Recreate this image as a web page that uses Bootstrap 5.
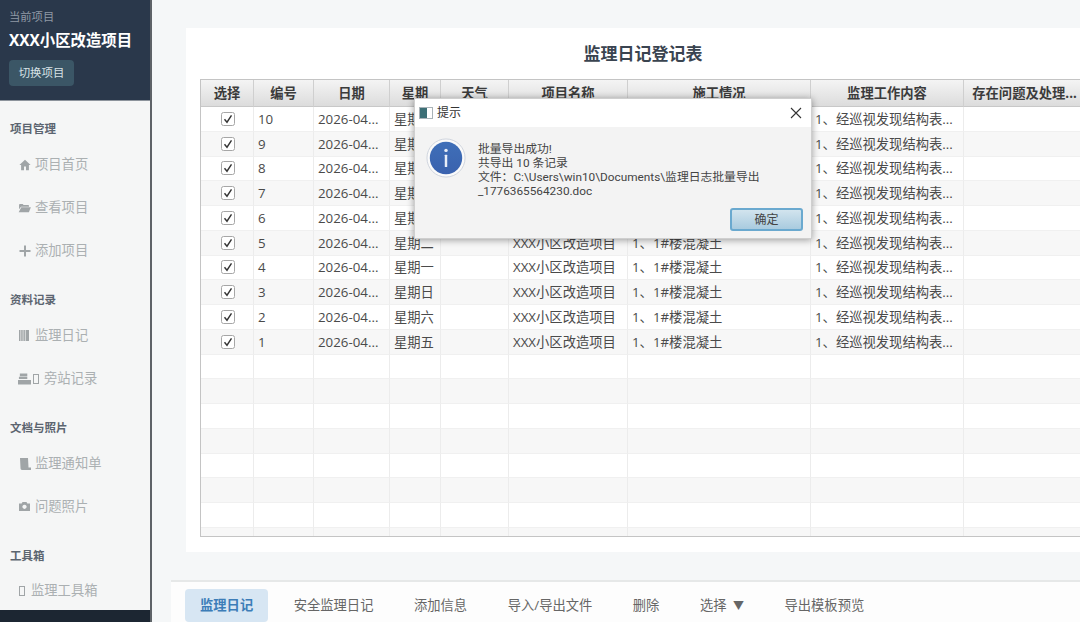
<!DOCTYPE html>
<html lang="zh">
<head>
<meta charset="utf-8">
<title>监理日记登记表</title>
<link href="https://cdn.jsdelivr.net/npm/bootstrap@5.3.0/dist/css/bootstrap.min.css" rel="stylesheet">
<style>
html,body{height:622px;overflow:hidden;}
body{font-family:"Open Sans","Noto Sans CJK SC",sans-serif;background:#f5f7f8;color:#444;width:1080px;}
.app-shell{height:622px;width:1080px;overflow:hidden;position:relative;}
.side-col{width:152px;flex:none;background:#f5f6f6;border-right:2px solid #5e6368;height:622px;}
.side-head{height:102px;background:#2a384b;border-bottom:1px solid #8d949c;padding:9px 9px 0;}
.side-kicker{font-size:11.3px;line-height:16px;color:#8f99a5;}
.side-project{font-size:15.4px;line-height:22px;font-weight:700;color:#fff;margin-top:5px;white-space:nowrap;}
.side-switch{display:block;width:65px;height:26px;margin-top:8px;padding:0;font-size:11.4px;line-height:26px;background:#3b5666;color:#d8e2e6;border:0;border-radius:4px;}
.side-nav{padding:18px 0 0 10px;overflow:hidden;}
.side-group{font-size:11.5px;line-height:20px;height:20px;font-weight:700;color:#5c6570;margin-bottom:4px;}
.side-entry{height:43px;display:flex;align-items:center;padding-left:8px;font-size:13.3px;color:#abb0b2;white-space:nowrap;}
.side-entry svg{flex:none;fill:#a0a5a7;margin-left:1px;}
.side-ico{width:17px;display:inline-flex;justify-content:flex-start;flex:none;}
.side-ico.ico-wide{width:15px;}
.side-ico.ico-wide svg{margin-left:0;}
.tofu{display:inline-block;width:6px;height:10px;border:1px solid #a0a5a7;margin-right:5px;flex:none;}
.tofu.tofu-lead{margin-left:1px;margin-right:6px;}
.side-block{margin-bottom:17.8px;}
.side-foot{height:12px;background:#1c2632;flex:none;}
.main-col{width:928px;flex:none;height:622px;}
.main-top{padding:28px 0 0 34px;height:580px;}
.sheet-card{width:914px;height:524px;background:#fff;padding:0 14px;}
.sheet-title{font-size:17px;font-weight:700;color:#3a4450;line-height:24px;margin:0;padding:14px 0 13px;text-align:center;}
.grid-box{border:1px solid #c4c4c4;height:458px;overflow:hidden;background:#fff;}
.grid-table{table-layout:fixed;width:885px;margin:0;border-collapse:separate;border-spacing:0;font-size:13.3px;}
.grid-table th{height:27px;padding:2px 2px 0;background:linear-gradient(#f4f4f4,#dcdcdc);font-size:13.3px;font-weight:700;color:#3b3b3b;text-align:center;border:0;border-right:1px solid #cfcfcf;border-bottom:1px solid #c8c8c8;white-space:nowrap;overflow:hidden;vertical-align:middle;}
.grid-table td{height:24.75px;padding:0 4px;border:0;border-right:1px solid #ececec;border-bottom:1px solid #f0f0f0;white-space:nowrap;overflow:hidden;color:#4a4a4a;vertical-align:middle;line-height:16px;background:#fff;}
.grid-table tr:nth-child(even) td{background:#f7f7f7;}
.grid-table td.cell-check{padding-left:5px;text-align:center;}
.tick{display:block;margin:0 auto;}
.tool-bar{height:42px;width:909px;margin-left:19px;background:#fdfdfd;border-top:2px solid #e6e8e8;padding:7px 14px 0;gap:10.5px;}
.tool-tab{height:33px;padding:0 15px;font-size:13.3px;line-height:33px;color:#666;background:transparent;border:0;border-radius:4px;white-space:nowrap;}
.tool-tab.is-on{background:#d7e6f3;color:#3c7db8;font-weight:700;}
.tab-caret{font-size:11px;margin-left:3px;}
.notice{position:absolute;left:414px;top:98px;width:398px;height:141px;background:#f3f3f3;box-shadow:0 1px 7px rgba(0,0,0,.38);border:1px solid #cfcfcf;}
.notice-bar{height:28px;background:#fff;padding:0 9px 0 4px;font-size:12px;color:#333;}
.notice-ico{width:14px;height:12px;border:1px solid #a9b3b8;background:linear-gradient(90deg,#3c6f76 0 60%,#fff 60%);margin-right:4px;flex:none;}
.notice-body{padding:11px 0 0 11px;}
.notice-msg{font-family:Roboto,"Noto Sans CJK SC",sans-serif;font-size:11.8px;line-height:14px;color:#444;margin-left:12px;margin-top:4px;white-space:nowrap;}
.notice-foot{position:absolute;right:8px;bottom:7px;}
.notice-ok{display:block;width:73px;height:23px;padding:0;font-size:12px;line-height:19px;color:#444;background:linear-gradient(#d2e4ee,#a9cbdf);border:2px solid #6aa9cf;border-radius:3px;}
</style>
</head>
<body>
<div class="app-shell d-flex">
  <aside class="side-col d-flex flex-column">
    <div class="side-head flex-none">
      <div class="side-kicker">当前项目</div>
      <div class="side-project">XXX小区改造项目</div>
      <button class="btn side-switch" type="button">切换项目</button>
    </div>
    <nav class="side-nav flex-grow-1">
      <div class="side-block">
        <div class="side-group">项目管理</div>
        <div class="side-entry"><span class="side-ico"><svg width="12" height="12" viewBox="0 0 12 12"><path d="M6 .8 .4 6h1.7v5.2h2.9V7.6h2v3.6h2.9V6h1.700z"/></svg></span><span>项目首页</span></div>
        <div class="side-entry"><span class="side-ico ico-wide" style="width:17px"><svg width="13" height="10" viewBox="0 0 14 11"><path d="M1 2.200C1 1.500 1.500 1 2.200 1h2.800l1 1.200h5c.6 0 1 .4 1 1v.8H3.200L1 7z"/><path d="M3.500 4.700H14l-2.200 5.500H.600z"/></svg></span><span>查看项目</span></div>
        <div class="side-entry"><span class="side-ico"><svg width="12" height="12" viewBox="0 0 12 12"><path d="M5 .5h2V5h4.500v2H7v4.500H5V7H.500V5H5z"/></svg></span><span>添加项目</span></div>
      </div>
      <div class="side-block">
        <div class="side-group">资料记录</div>
        <div class="side-entry"><span class="side-ico"><svg width="10" height="11" viewBox="0 0 10 11"><path d="M0 0h1.500v11H0zM2.200 0h1.500v11H2.200zM4.400 0h1.500v11H4.400zM6.600 0H10v11H6.600z"/></svg></span><span>监理日记</span></div>
        <div class="side-entry"><span class="side-ico ico-wide"><svg width="13" height="12" viewBox="0 0 14 12"><path d="M2 0h8v3H2zM1 3.500h9V6H1zM0 7h14v5H0z"/></svg></span><span class="tofu"></span><span>旁站记录</span></div>
      </div>
      <div class="side-block">
        <div class="side-group">文档与照片</div>
        <div class="side-entry"><span class="side-ico"><svg width="12" height="12" viewBox="0 0 12 12"><path d="M1 0h8l.5 9.500H12V12H3C2 12 1.500 11 1.500 10z"/></svg></span><span>监理通知单</span></div>
        <div class="side-entry"><span class="side-ico"><svg width="11" height="9" viewBox="0 0 11 9"><path fill-rule="evenodd" d="M3.500 0h4l.8 1.500H11V9H0V1.500h2.700zM5.500 2.700a2.100 2.100 0 1 0 .01 0z"/></svg></span><span>问题照片</span></div>
      </div>
      <div>
        <div class="side-group">工具箱</div>
        <div class="side-entry"><span class="tofu tofu-lead"></span><span>监理工具箱</span></div>
      </div>
    </nav>
    <div class="side-foot"></div>
  </aside>
  <main class="main-col d-flex flex-column">
    <div class="main-top">
      <section class="sheet-card">
        <h1 class="sheet-title">监理日记登记表</h1>
        <div class="grid-box">
          <table class="table grid-table">
            <colgroup><col style="width:53px"><col style="width:60px"><col style="width:76px"><col style="width:51px"><col style="width:68px"><col style="width:119px"><col style="width:183px"><col style="width:153px"><col style="width:122px"></colgroup>
            <thead><tr><th>选择</th><th>编号</th><th>日期</th><th>星期</th><th>天气</th><th>项目名称</th><th>施工情况</th><th>监理工作内容</th><th>存在问题及处理...</th></tr></thead>
            <tbody id="rows"></tbody>
          </table>
        </div>
      </section>
    </div>
    <div class="tool-bar d-flex align-items-start">
      <button class="btn tool-tab is-on" type="button">监理日记</button>
      <button class="btn tool-tab" type="button">安全监理日记</button>
      <button class="btn tool-tab" type="button">添加信息</button>
      <button class="btn tool-tab" type="button">导入/导出文件</button>
      <button class="btn tool-tab" type="button">删除</button>
      <button class="btn tool-tab" type="button">选择 <span class="tab-caret">▼</span></button>
      <button class="btn tool-tab" type="button">导出模板预览</button>
    </div>
  </main>
  <div class="notice" role="dialog">
    <div class="notice-bar d-flex align-items-center">
      <span class="notice-ico"></span><span>提示</span>
      <svg class="ms-auto" width="12" height="12" viewBox="0 0 12 12"><path d="M1 1l10 10M11 1 1 11" stroke="#333" stroke-width="1.100" fill="none"/></svg>
    </div>
    <div class="notice-body d-flex align-items-start">
      <svg class="flex-none" width="40" height="40" viewBox="0 0 42 42">
        <defs><linearGradient id="ib" x1="0" y1="0" x2="0" y2="1"><stop offset="0" stop-color="#3f6fb8"/><stop offset="1" stop-color="#3a62ae"/></linearGradient></defs>
        <circle cx="21" cy="21" r="20" fill="#fafafa" stroke="#cdd3dc"/>
        <circle cx="21" cy="21" r="17" fill="url(#ib)"/>
        <circle cx="21" cy="13" r="1.800" fill="#e8eef8"/>
        <rect x="19.700" y="17.500" width="2.600" height="13" rx=".6" fill="#e8eef8"/>
      </svg>
      <div class="notice-msg">批量导出成功!<br>共导出 10 条记录<br>文件：C:\Users\win10\Documents\监理日志批量导出<br>_1776365564230.doc</div>
    </div>
    <div class="notice-foot"><button class="btn notice-ok" type="button">确定</button></div>
  </div>
</div>
<script>
var wk=['星期五','星期六','星期日','星期一','星期二','星期三','星期四','星期五','星期六','星期日'];
var tick='<svg class="tick" width="14" height="14" viewBox="0 0 14 14"><rect x=".5" y=".5" width="13" height="13" rx="2" fill="#fff" stroke="#a6a6a6"/><path d="M3.500 7.200 6 10.200 10.500 3.300" fill="none" stroke="#333" stroke-width="1.400"/></svg>';
var h='';
for(var i=10;i>=1;i--){h+='<tr><td class="cell-check">'+tick+'</td><td>'+i+'</td><td>2026-04...</td><td>'+wk[i-1]+'</td><td></td><td>XXX小区改造项目</td><td>1、1#楼混凝土</td><td>1、经巡视发现结构表...</td><td></td></tr>';}
for(var j=0;j<8;j++){h+='<tr><td></td><td></td><td></td><td></td><td></td><td></td><td></td><td></td><td></td></tr>';}
document.getElementById('rows').innerHTML=h;
</script>
<script src="https://cdn.jsdelivr.net/npm/bootstrap@5.3.0/dist/js/bootstrap.bundle.min.js"></script>
</body>
</html>
